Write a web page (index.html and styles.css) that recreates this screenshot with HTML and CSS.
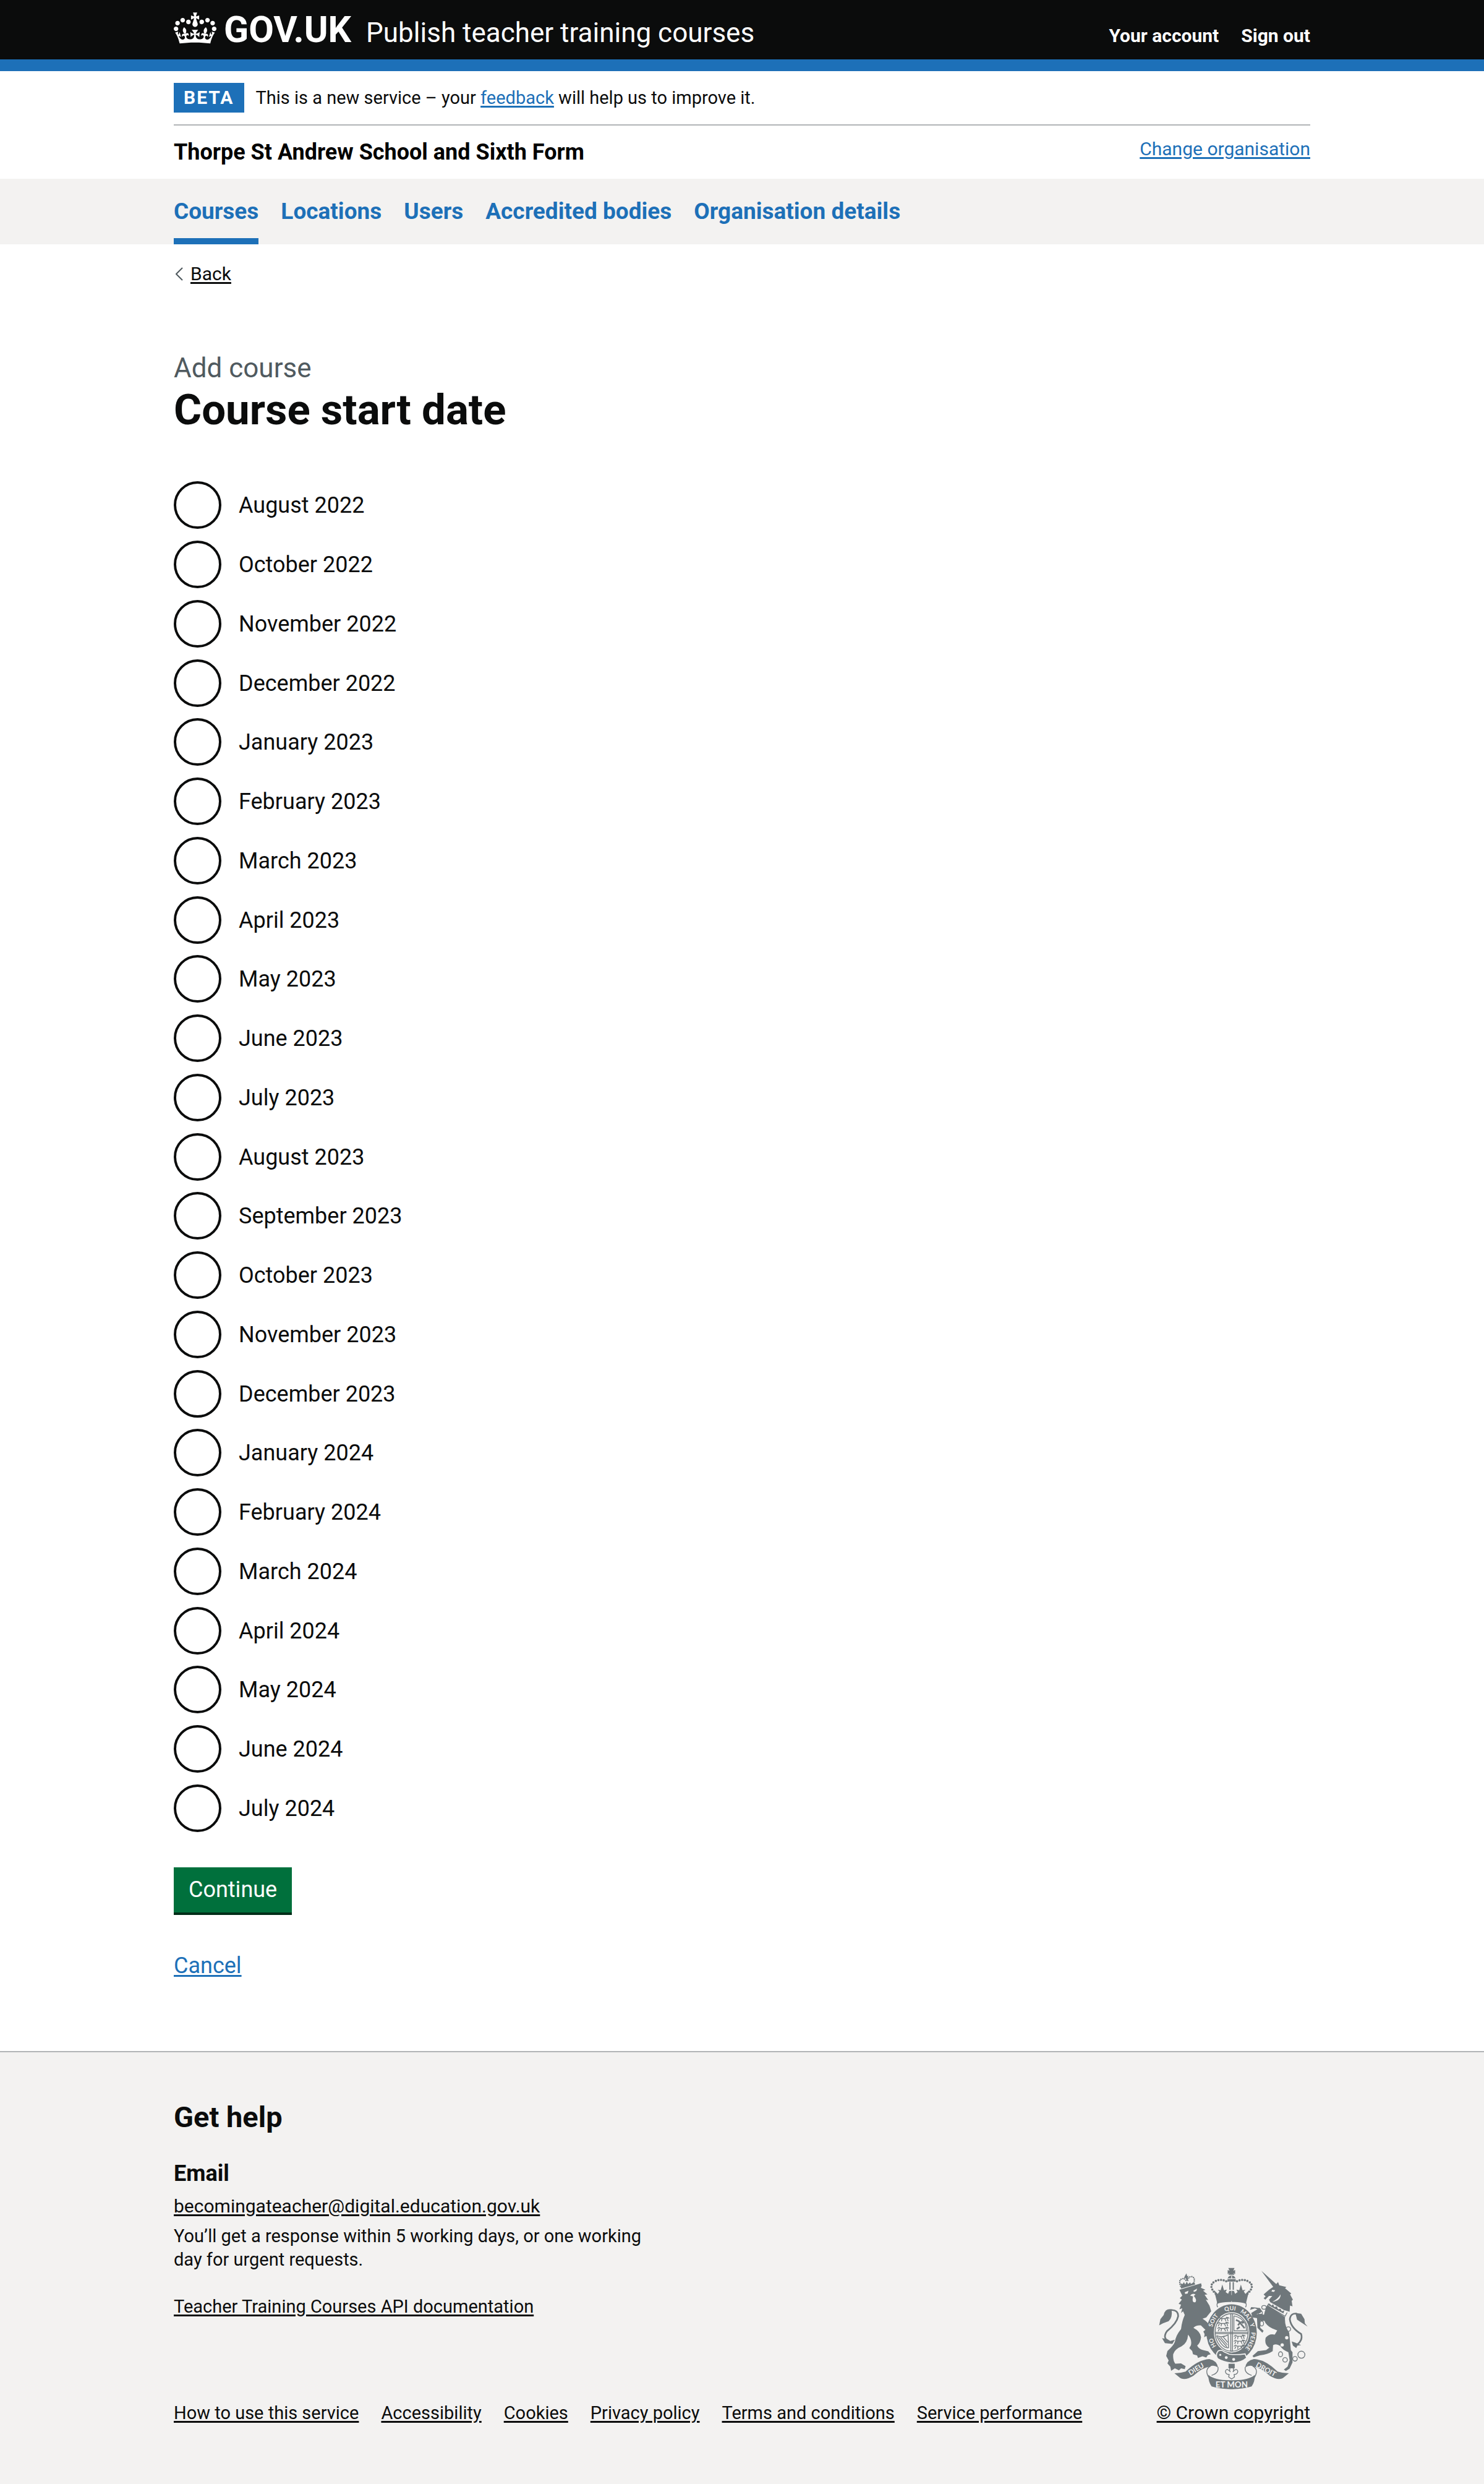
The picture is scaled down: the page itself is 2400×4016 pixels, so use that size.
FILE: index.html
```html
<!DOCTYPE html>
<html lang="en">
<head>
<meta charset="utf-8">
<meta name="viewport" content="width=device-width, initial-scale=1">
<title>Course start date - Publish teacher training courses</title>
<link rel="stylesheet" href="styles.css">
</head>
<body>
<header class="header">
  <div class="container header-row">
    <a class="logo" href="#"><svg class="crown" viewBox="0 0 132 97" aria-hidden="true"><path fill="currentColor" fill-rule="evenodd" d="M25 30.2c3.5 1.5 7.7-.2 9.1-3.7 1.5-3.6-.2-7.8-3.9-9.2-3.6-1.4-7.6.3-9.1 3.9-1.4 3.5.3 7.5 3.9 9zM9 39.5c3.6 1.5 7.8-.2 9.2-3.7 1.5-3.6-.2-7.8-3.9-9.1-3.6-1.5-7.6.2-9.1 3.8-1.4 3.5.3 7.5 3.8 9zM4.4 57.2c3.5 1.5 7.7-.2 9.1-3.8 1.5-3.6-.2-7.7-3.9-9.1-3.5-1.5-7.6.3-9.1 3.8-1.4 3.5.3 7.6 3.9 9.1zm38.3-21.4c3.5 1.5 7.7-.2 9.1-3.8 1.5-3.6-.2-7.7-3.9-9.1-3.6-1.5-7.6.3-9.1 3.8-1.3 3.6.4 7.7 3.9 9.1zm64.4-5.6c-3.6 1.5-7.8-.2-9.1-3.7-1.5-3.6.2-7.8 3.8-9.2 3.6-1.4 7.7.3 9.2 3.9 1.3 3.5-.4 7.5-3.9 9zm15.9 9.3c-3.6 1.5-7.7-.2-9.1-3.7-1.5-3.6.2-7.8 3.7-9.1 3.6-1.5 7.7.2 9.2 3.8 1.5 3.5-.3 7.5-3.8 9zm4.7 17.7c-3.6 1.5-7.8-.2-9.2-3.8-1.5-3.6.2-7.7 3.9-9.1 3.6-1.5 7.7.3 9.2 3.8 1.3 3.5-.4 7.6-3.9 9.1zM89.3 35.8c-3.6 1.5-7.8-.2-9.2-3.8-1.4-3.6.2-7.7 3.9-9.1 3.6-1.5 7.7.3 9.2 3.8 1.4 3.6-.3 7.7-3.9 9.1zM69.7 17.7l8.9 4.7V9.3l-8.9 2.8c-.2-.3-.5-.6-.9-.9L72.4 0H59.6l3.5 11.2c-.3.3-.6.5-.9.9l-8.8-2.8v13.1l8.8-4.7c.3.3.6.7.9.9l-5 15.4v.1c-.2.8-.4 1.6-.4 2.4 0 4.1 3.1 7.5 7 8.1h.2c.3 0 .7.1 1 .1.4 0 .7 0 1-.1h.2c4-.6 7.1-4.1 7.1-8.1 0-.8-.1-1.7-.4-2.4V34l-5.1-15.4c.4-.2.7-.6 1-.9zM66 92.8c16.9 0 32.8 1.1 47.1 3.2 4-16.9 8.9-26.7 14-33.5l-9.6-3.4c1 4.9 1.1 7.2 0 10.2-1.5-1.4-3-4.3-4.2-8.7L108.6 76c2.8-2 5-3.2 7.5-3.3-4.4 9.4-10 11.9-13.6 11.2-4.3-.8-6.3-4.6-5.6-7.9 1-4.7 5.7-5.9 8-.5 4.3-8.7-3-11.4-7.6-8.8 7.1-7.2 7.9-13.5 2.1-21.1-8 6.1-8.1 12.3-4.5 20.8-4.7-5.4-12.1-2.5-9.5 6.2 3.4-5.2 7.9-2 7.2 3.1-.6 4.3-6.4 7.8-13.5 7.2-10.3-.9-10.9-8-11.2-13.8 2.5-.5 7.1 1.8 11 7.3L80.2 60c-4.1 4.4-8 5.3-12.3 5.4 1.4-4.4 8-11.6 8-11.6H55.5s6.4 7.2 7.9 11.6c-4.2-.1-8-1-12.3-5.4l1.4 16.4c3.9-5.5 8.5-7.7 10.9-7.3-.3 5.8-.9 12.8-11.1 13.8-7.2.6-12.9-2.9-13.5-7.2-.7-5 3.8-8.3 7.1-3.1 2.7-8.7-4.6-11.6-9.4-6.2 3.7-8.5 3.6-14.7-4.6-20.8-5.8 7.6-5 13.9 2.2 21.1-4.7-2.6-11.9.1-7.7 8.8 2.3-5.5 7.1-4.2 8.1.5.7 3.3-1.3 7.1-5.7 7.9-3.5.7-9-1.8-13.5-11.2 2.5.1 4.7 1.3 7.5 3.3l-4.7-15.4c-1.2 4.4-2.7 7.2-4.3 8.7-1.1-3-.9-5.3 0-10.2l-9.5 3.4c5 6.9 9.9 16.7 14 33.5 14.8-2.1 30.8-3.2 47.7-3.2z"/></svg>GOV.UK</a>
    <a class="service-name" href="#">Publish teacher training courses</a>
    <nav class="account" aria-label="Account">
      <a href="#">Your account</a>
      <a href="#">Sign out</a>
    </nav>
  </div>
</header>

<div class="container">
  <div class="phase">
    <strong class="tag">BETA</strong>
    <span>This is a new service – your <a class="link" href="#">feedback</a> will help us to improve it.</span>
  </div>
  <div class="organisation">
    <strong class="organisation-name">Thorpe St Andrew School and Sixth Form</strong>
    <a class="link large" href="#">Change organisation</a>
  </div>
</div>

<nav class="primary-nav" aria-label="Primary">
  <ul class="container primary-list">
    <li><a class="current" href="#" aria-current="page">Courses</a></li>
    <li><a href="#">Locations</a></li>
    <li><a href="#">Users</a></li>
    <li><a href="#">Accredited bodies</a></li>
    <li><a href="#">Organisation details</a></li>
  </ul>
</nav>

<main class="container main">
  <div class="back">
    <svg class="chevron" viewBox="0 0 12 22" aria-hidden="true"><path d="M11 1 1 11l10 10" fill="none" stroke="currentColor" stroke-width="2"/></svg>
    <a class="link dark large" href="#">Back</a>
  </div>
  <form class="form">
    <fieldset class="fieldset">
      <legend>
        <span class="caption">Add course</span>
        <h1>Course start date</h1>
      </legend>
      <div class="radios">
        <label class="radio"><input type="radio" name="start">August 2022</label>
        <label class="radio"><input type="radio" name="start">October 2022</label>
        <label class="radio"><input type="radio" name="start">November 2022</label>
        <label class="radio"><input type="radio" name="start">December 2022</label>
        <label class="radio"><input type="radio" name="start">January 2023</label>
        <label class="radio"><input type="radio" name="start">February 2023</label>
        <label class="radio"><input type="radio" name="start">March 2023</label>
        <label class="radio"><input type="radio" name="start">April 2023</label>
        <label class="radio"><input type="radio" name="start">May 2023</label>
        <label class="radio"><input type="radio" name="start">June 2023</label>
        <label class="radio"><input type="radio" name="start">July 2023</label>
        <label class="radio"><input type="radio" name="start">August 2023</label>
        <label class="radio"><input type="radio" name="start">September 2023</label>
        <label class="radio"><input type="radio" name="start">October 2023</label>
        <label class="radio"><input type="radio" name="start">November 2023</label>
        <label class="radio"><input type="radio" name="start">December 2023</label>
        <label class="radio"><input type="radio" name="start">January 2024</label>
        <label class="radio"><input type="radio" name="start">February 2024</label>
        <label class="radio"><input type="radio" name="start">March 2024</label>
        <label class="radio"><input type="radio" name="start">April 2024</label>
        <label class="radio"><input type="radio" name="start">May 2024</label>
        <label class="radio"><input type="radio" name="start">June 2024</label>
        <label class="radio"><input type="radio" name="start">July 2024</label>
      </div>
    </fieldset>
    <button class="button" type="button">Continue</button>
    <a class="link cancel" href="#">Cancel</a>
  </form>
</main>

<footer class="footer">
  <div class="container footer-row">
    <div class="footer-main">
      <h2>Get help</h2>
      <div class="help">
        <h3>Email</h3>
        <a class="link dark large" href="#">becomingateacher@digital.education.gov.uk</a>
        <p>You’ll get a response within 5 working days, or one working day for urgent requests.</p>
      </div>
      <a class="link dark" href="#">Teacher Training Courses API documentation</a>
      <ul class="footer-links">
        <li><a class="link dark" href="#">How to use this service</a></li>
        <li><a class="link dark" href="#">Accessibility</a></li>
        <li><a class="link dark" href="#">Cookies</a></li>
        <li><a class="link dark" href="#">Privacy policy</a></li>
        <li><a class="link dark" href="#">Terms and conditions</a></li>
        <li><a class="link dark" href="#">Service performance</a></li>
      </ul>
    </div>
    <a class="copyright link dark large" href="#">
      <svg class="arms" viewBox="100 80 722 590" aria-hidden="true">
        <defs>
          <path id="motto" pathLength="360" d="M453 501A95 107 0 0 1 453 287A95 107 0 0 1 453 501"/>
          <g id="arch">
            <path class="beads" d="M376 207Q336 168 372 147Q405 130 438 153"/>
            <path class="ink" d="M368 190l18 18 8-12-8-8 14 2 8-28 8 28 14-3-6 12 12 8 6-14h10v54q-40-2-68 8Z"/>
          </g>
          <path id="passant" class="line" d="M0 8l8-6 8 5h22l10-5 8 4M10 8l-6 12M20 8l-2 12M34 8l6 12M46 6l4 14M40 0l8 6"/>
          <g id="ribbon">
            <path class="ink" d="M176 592Q206 592 230 584Q290 526 345 523Q382 530 387 564Q366 550 348 560Q312 564 268 604Q222 632 198 610Z"/>
            <path class="line" d="M387 562Q392 592 356 602M350 558Q320 574 342 612"/>
          </g>
        </defs>
        <g transform="translate(90 60)">
          <path class="ink" d="M110 128L150 116L215 96L218 108L214 118L236 128L225 132L246 150L232 152L250 178L238 176L256 205L264 232L240 262L222 268Q250 285 262 310L278 345L270 364L258 352L252 364L240 352L230 358L232 342L226 330L236 322L214 300Q190 298 178 312Q212 330 215 358Q212 385 196 398Q205 415 225 420L250 426L262 440L248 444L240 456L222 450L200 458L196 446L176 440L172 424L158 410L166 396Q172 370 152 345Q150 385 120 402Q88 415 80 440Q78 470 90 486L118 484L140 498L136 512L118 508L108 518L88 508L70 520L66 500L52 484L58 470L46 448L52 424Q80 400 88 380Q92 350 118 318Q122 280 136 250L128 232L118 240L124 218L110 222L118 200L106 196L122 176L112 168L124 156Z"/>
          <path class="paper" d="M136 140l18-8-4 14-12 2zM178 132l18-10-4 12-12 4zM162 156q10-14 26-6l-8 8q16 18 8 30-14 4-14-14l2-14z"/>
          <path class="line thick" d="M60 380Q26 362 50 328Q98 290 104 256Q104 224 70 226"/>
          <path class="ink" d="M72 222Q40 218 34 250L18 270L12 300L30 290L58 280Q78 262 72 222ZM26 362L50 366L66 376L88 370L76 390L40 386Z"/>
          <path class="ink" d="M116 112l68-18 2 8-68 20zM118 106l-4-10 12 4 6-10 6 12 8-14 6 12 10-8 4 8 12-8-2 12-56 14zM136 62l8-14 4 14 8-2-6 8 4 18-8-2-6-14-8 2z"/>
          <path class="beads small-beads" d="M116 110Q104 78 124 75Q136 70 142 84M180 94Q188 68 170 64Q156 62 152 78"/>
        </g>
        <g transform="translate(450 60)">
          <path class="ink" d="M147 36L226 106L206 116ZM210 110L228 90L234 106L268 114L262 120L292 146L286 150L300 176L294 182L298 208L286 204L284 234L256 226L190 188L184 176L200 158L184 158L166 176L158 168L168 160L158 150L184 128Z"/>
          <path class="ink" d="M176 202L262 260Q258 300 282 335L290 420L298 430L298 480L284 510L266 521L256 514L274 500L284 470L278 430Q250 420 238 400Q220 386 204 396L202 425Q180 440 140 445L110 455L104 448L130 425L170 420L186 408Q160 395 168 360Q185 338 212 345L224 325L200 315Q170 300 162 278L142 278L142 312L158 326L152 336L128 312L126 264L160 248Q168 215 176 202Z"/>
          <path class="ink" d="M162 252L130 266L104 262L98 240L128 222L116 218L92 225L98 212L140 216L150 230L142 240L122 246L150 244Z"/>
          <path class="ink" d="M186 194l10 10 8-6 6 14 12-4 6 14 12-2 6 12 12-4-4 14-74-40z"/>
          <path class="line" d="M182 194l-4 12 84 50 10-18"/>
          <path class="paper" d="M200 128l14 2-6 8-12-2zM240 150q2 30-40 36 28-14 40-36z"/>
          <path class="line thick" d="M312 398Q350 376 340 342Q290 312 285 270Q290 238 320 244"/>
          <path class="ink" d="M312 240L340 244L356 270L358 290L371 306L340 286L320 272ZM294 378L312 384L340 396L322 398L316 410L300 398Z"/>
          <g class="line"><ellipse cx="160" cy="213" rx="11" ry="9"/><circle cx="142" cy="240" r="10"/><ellipse cx="149" cy="291" rx="9" ry="12"/><circle cx="278" cy="318" r="11"/><ellipse cx="240" cy="440" rx="10" ry="12"/><circle cx="262" cy="467" r="11"/><circle cx="310" cy="462" r="11"/><circle cx="341" cy="442" r="17"/></g>
          <g class="paper"><circle cx="270" cy="360" r="8"/><circle cx="248" cy="395" r="8"/></g>
        </g>
        <path class="ink" d="M437 82h30l-6 14 9-4v20l-9-5 6 8h-30l6-8-9 5V92l9 4zM432 148q0-30 21-30t21 30zM442 150h6v38h-6zM458 150h6v38h-6z"/>
        <use href="#arch"/><use href="#arch" transform="translate(906) scale(-1 1)"/>
        <path class="paper-line" d="M434 134h38M453 120v14"/>
        <path class="ink" d="M382 222q71-18 142 0l-6 26q-66-12-130 0z"/>
        <path class="line" d="M386 248q-8 14 0 24M520 248q8 14 0 24"/>
        <ellipse class="ink" cx="453" cy="396" rx="122" ry="138"/>
        <ellipse class="paper" cx="453" cy="394" rx="86" ry="98"/>
        <ellipse class="line" cx="453" cy="394" rx="80" ry="91"/>
        <path class="line" d="M449 302v184M457 302v184M373 394h160M373 400h160"/>
        <use href="#passant" x="386" y="320"/><use href="#passant" x="384" y="344"/><use href="#passant" x="384" y="368"/>
        <use href="#passant" x="464" y="406"/><use href="#passant" x="464" y="430"/><use href="#passant" x="464" y="454"/>
        <path class="line thick" d="M474 334l14 6 16 20 12 14M484 360l10-14 14-4M478 378l14-10M504 350l10-8"/>
        <path class="line" d="M464 314v72h62l-6-32q-16-32-56-40M380 410q28 12 56-4l2 62q-28 6-58-58M390 418l40 46M400 418l32 36M412 416l22 26"/>
        <g class="motto">
          <text><textPath href="#motto" startOffset="62">HO</textPath></text>
          <text><textPath href="#motto" startOffset="122">SOIT</textPath></text>
          <text><textPath href="#motto" startOffset="176">QUI</textPath></text>
          <text><textPath href="#motto" startOffset="221">MAL</textPath></text>
          <text><textPath href="#motto" startOffset="251">Y</textPath></text>
          <text><textPath href="#motto" startOffset="294">PENSE</textPath></text>
        </g>
        <path class="ink edge" d="M388 484q18-8 28 4l26 12q40 4 76-2l8 20q-30 26-74 24-40-4-66-20-14-20 2-38z"/>
        <g class="paper"><circle cx="427" cy="516" r="7"/><circle cx="463" cy="525" r="7"/><circle cx="398" cy="503" r="5"/></g>
        <path class="ink" d="M438 546h30v22h-30z"/>
        <path class="line" d="M453 556q16 16 6 30 18-22 24-4 0 16-18 16l2 12-14 10-14-10 2-12q-18 0-18-16 6-18 24 4-10-14 6-30z"/>
        <use href="#ribbon"/><use href="#ribbon" transform="translate(906) scale(-1 1)"/>
        <path class="ink" d="M340 600Q372 628 453 626Q534 628 566 600Q566 634 550 656Q500 670 453 669Q406 670 356 656Q340 634 340 600Z"/>
        <g class="scroll-text">
          <text x="453" y="660">ET MON</text>
          <text transform="translate(287 582) rotate(-31)">DIEU</text>
          <text transform="translate(614 584) rotate(29)">DROIT</text>
        </g>
      </svg>
      <span>© Crown copyright</span>
    </a>
  </div>
</footer>
</body>
</html>
```
FILE: styles.css
```css
:root {
  --ink: #0b0c0c;
  --blue: #1d70b8;
  --green: #00703c;
  --grey: #f3f2f1;
  --rule: #b1b4b6;
  --muted: #505a5f;
  --crest: #6f777b;
}

* { box-sizing: border-box; }

body {
  margin: 0;
  color: var(--ink);
  background: #fff;
  font-family: Roboto, "Liberation Sans", sans-serif;
  font-size: 29px;
  line-height: 38px;
}

h1, h2, h3, p, ul { margin: 0; padding: 0; }
ul { list-style: none; }

.container {
  max-width: 1838px;
  margin: 0 auto;
}

.link {
  color: var(--blue);
  text-decoration: underline;
  text-decoration-thickness: 3px;
  text-underline-offset: 3px;
}
.link.dark { color: var(--ink); }
.large { font-size: 30px; }

/* Header */
.header {
  background: var(--ink);
  border-bottom: 19px solid var(--blue);
}
.header-row {
  display: flex;
  align-items: baseline;
  padding: 20px 0 15px;
}
.header a { color: #fff; text-decoration: none; }
.logo {
  font-size: 59px;
  font-weight: 700;
  line-height: 56px;
}
.crown {
  width: 69px;
  height: 51px;
  margin-right: 12px;
  vertical-align: -3px;
}
.service-name {
  margin-left: 24px;
  font-size: 44px;
  line-height: 56px;
}
.account {
  display: flex;
  gap: 36px;
  margin-left: auto;
  font-size: 30px;
  font-weight: 700;
}

/* Phase banner and organisation */
.phase {
  display: flex;
  gap: 19px;
  padding: 19px 0;
  border-bottom: 2px solid var(--rule);
  line-height: 48px;
}
.tag {
  padding: 0 16px;
  color: #fff;
  background: var(--blue);
  font-size: 30px;
  letter-spacing: 2px;
}
.organisation {
  display: flex;
  justify-content: space-between;
  align-items: flex-start;
  padding: 19px 0;
}
.organisation-name {
  color: #000;
  font-size: 36px;
  line-height: 48px;
}

/* Primary navigation */
.primary-nav { background: var(--grey); }
.primary-list {
  display: flex;
  gap: 36px;
  font-size: 37px;
  font-weight: 700;
  line-height: 48px;
}
.primary-list a {
  display: block;
  padding: 29px 0 19px;
  border-bottom: 10px solid transparent;
  color: var(--blue);
  text-decoration: none;
}
.primary-list .current { border-bottom-color: var(--blue); }

/* Main content */
.main { padding: 29px 0 114px; }
.back {
  display: flex;
  align-items: center;
  gap: 12px;
  padding-left: 3px;
}
.chevron {
  width: 12px;
  height: 22px;
  color: var(--muted);
}
.form {
  display: flex;
  flex-direction: column;
  align-items: flex-start;
  margin-top: 104px;
}
.fieldset {
  margin: 0;
  padding: 0;
  border: 0;
}
legend { padding: 0; }
.caption {
  display: block;
  color: var(--muted);
  font-size: 44px;
  line-height: 58px;
}
h1 {
  font-size: 69px;
  line-height: 77px;
}
.radios { margin-top: 77px; }
.radio {
  display: flex;
  align-items: center;
  gap: 28px;
  margin-bottom: 19px;
  font-size: 36px;
  line-height: 48px;
}
.radio:nth-child(4n) { margin-bottom: 18px; }
.radio:last-child { margin-bottom: 0; }
.radio input {
  appearance: none;
  width: 77px;
  height: 77px;
  margin: 0;
  border: 4px solid var(--ink);
  border-radius: 50%;
}
.radio input:checked {
  background: radial-gradient(var(--ink) 50%, transparent 52%);
}
.button {
  margin-top: 57px;
  padding: 12px 24px 13px;
  border: 0;
  color: #fff;
  background: var(--green);
  box-shadow: 0 4px 0 #002d18;
  font-family: inherit;
  font-size: 36px;
  line-height: 48px;
}
.cancel {
  margin-top: 62px;
  font-size: 36px;
  line-height: 48px;
}

/* Footer */
.footer {
  padding: 76px 0 96px;
  border-top: 2px solid var(--rule);
  background: var(--grey);
}
.footer-row {
  display: flex;
  justify-content: space-between;
  align-items: flex-end;
}
h2 {
  font-size: 47px;
  line-height: 58px;
}
.help {
  max-width: 800px;
  margin: 38px 0;
}
h3 {
  margin-bottom: 10px;
  font-size: 36px;
  line-height: 48px;
}
.help p { margin-top: 10px; }
.footer-links {
  display: flex;
  flex-wrap: wrap;
  gap: 0 36px;
  margin-top: 134px;
}
.copyright {
  display: flex;
  flex-direction: column;
  align-items: center;
  gap: 19px;
}

/* Royal coat of arms */
.arms {
  width: 241px;
  height: 197px;
}
.ink { fill: var(--crest); }
.paper { fill: var(--grey); }
.edge { stroke: var(--grey); stroke-width: 5px; }
.line { fill: none; stroke: var(--crest); stroke-width: 4px; }
.thick { stroke-width: 8px; }
.paper-line { fill: none; stroke: var(--grey); stroke-width: 4px; }
.beads {
  fill: none;
  stroke: var(--crest);
  stroke-width: 11px;
  stroke-linecap: round;
  stroke-dasharray: 0 13;
}
.small-beads { stroke-width: 7px; stroke-dasharray: 0 9; }
.motto, .scroll-text {
  fill: var(--grey);
  font-family: Lato, sans-serif;
  font-weight: 700;
  text-anchor: middle;
}
.motto { font-size: 28px; }
.scroll-text { font-size: 40px; }
.scroll-text [transform] { font-size: 34px; }
```
